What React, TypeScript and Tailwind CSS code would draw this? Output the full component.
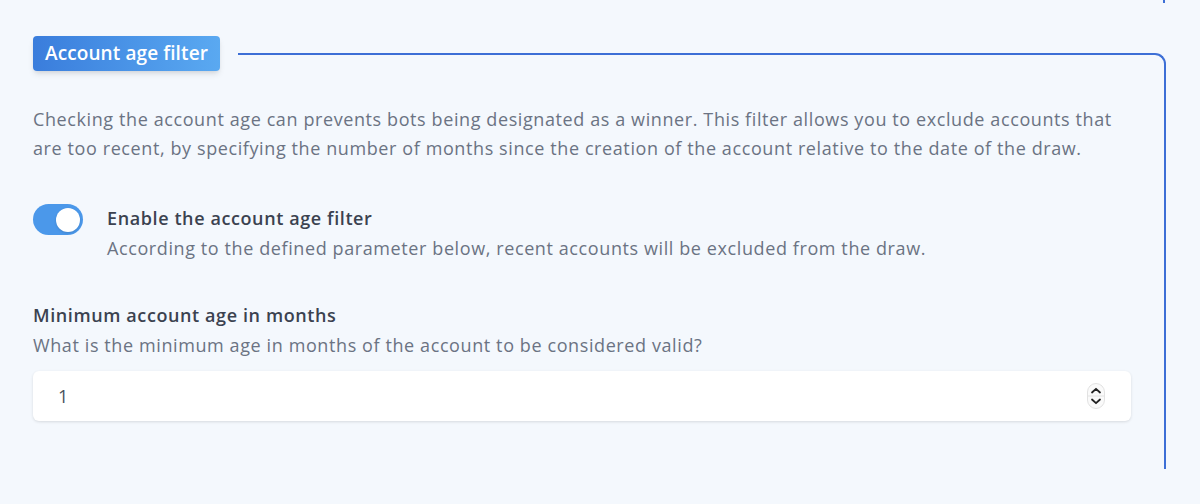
import React, { useState } from "react";

function Toggle({ on, onChange }: { on: boolean; onChange: () => void }) {
  return (
    <button
      type="button"
      onClick={onChange}
      className={`relative shrink-0 w-[50px] h-[31px] rounded-full transition-colors ${
        on ? "bg-[#4b98ea]" : "bg-gray-300"
      }`}
    >
      <span
        className={`absolute top-[3.5px] w-6 h-6 rounded-full bg-white shadow-sm transition-all ${
          on ? "left-[23px]" : "left-[3px]"
        }`}
      />
    </button>
  );
}

function Spinner() {
  return (
    <svg width="18" height="26" viewBox="0 0 18 26" fill="none">
      <rect x="0.5" y="0.5" width="17" height="25" rx="8.5" fill="#fafafa" stroke="#e2e2e2" />
      <line x1="1" y1="13" x2="17" y2="13" stroke="#e2e2e2" />
      <path d="M5 9.5 L9 5.8 L13 9.5" stroke="#222" strokeWidth="1.8" strokeLinecap="round" strokeLinejoin="round" />
      <path d="M5 16.5 L9 20.2 L13 16.5" stroke="#222" strokeWidth="1.8" strokeLinecap="round" strokeLinejoin="round" />
    </svg>
  );
}

export default function App() {
  const [enabled, setEnabled] = useState(true);
  const [months, setMonths] = useState("1");

  return (
    <div className="w-[1200px] h-[504px] bg-[#f4f8fd] overflow-hidden font-['Open_Sans',sans-serif] tracking-[0.6px]">
      <div className="flex justify-end w-[1165px]">
        <div className="w-[2px] h-[3px] bg-[#3d6fd6]" />
      </div>
      <div className="w-[1166px] pl-[33px] pt-[33px]">
        <div className="flex">
          <div className="h-[35px] px-3 flex items-center rounded-[4px] bg-gradient-to-r from-[#3a7ddc] to-[#5aa9f1] text-white text-[19px] tracking-[0.1px] font-semibold shadow-md">
            Account age filter
          </div>
          <div className="flex-1 ml-[18px] mt-[17px] h-[18px] border-t-2 border-r-2 border-[#3d6fd6] rounded-tr-[11px]" />
        </div>
        <div className="border-r-2 border-[#3d6fd6] pr-[33px] pt-[34px] h-[398px]">
          <p className="text-[18px] leading-[29px] text-[#6b7383]">
            Checking the account age can prevents bots being designated as a winner. This filter allows you to exclude
            accounts that are too recent, by specifying the number of months since the creation of the account relative
            to the date of the draw.
          </p>
          <div className="flex gap-6 mt-[40px]">
            <div className="pt-[1px]">
              <Toggle on={enabled} onChange={() => setEnabled(!enabled)} />
            </div>
            <div>
              <div className="text-[18px] leading-[30px] font-semibold text-[#3b4250]">Enable the account age filter</div>
              <div className="text-[18px] leading-[30px] text-[#6b7383]">
                According to the defined parameter below, recent accounts will be excluded from the draw.
              </div>
            </div>
          </div>
          <div className="mt-[37px]">
            <div className="text-[18px] leading-[30px] font-semibold text-[#3b4250]">Minimum account age in months</div>
            <div className="text-[18px] leading-[30px] text-[#6b7383]">
              What is the minimum age in months of the account to be considered valid?
            </div>
            <div className="mt-[11px] h-[50px] bg-white rounded-[6px] shadow-[0_1px_3px_rgba(0,0,0,0.12)] flex items-center pl-[25px] pr-[26px]">
              <input
                value={months}
                onChange={(e) => setMonths(e.target.value)}
                className="flex-1 bg-transparent outline-none text-[18px] text-[#4a5260]"
              />
              <Spinner />
            </div>
          </div>
        </div>
      </div>
    </div>
  );
}
